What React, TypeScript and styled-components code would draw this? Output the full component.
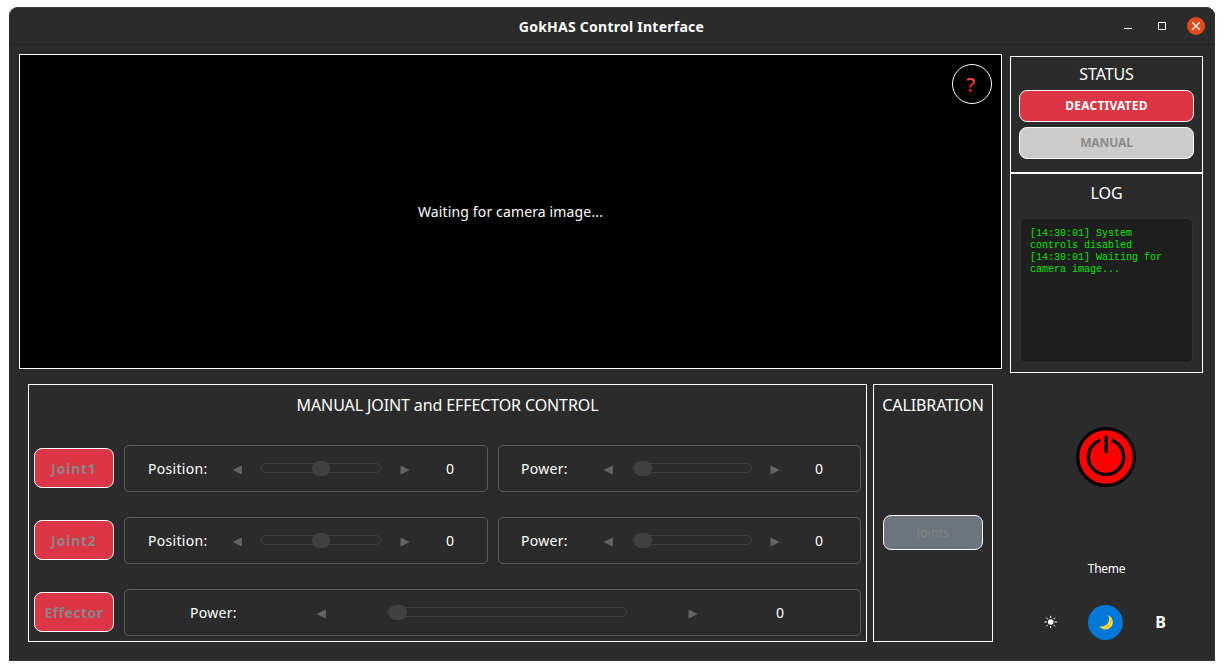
import React from "react";
import styled, { createGlobalStyle } from "styled-components";

const GlobalStyle = createGlobalStyle`
  * { box-sizing: border-box; }
  body { margin: 0; background: #fff; font-family: "Noto Sans", "Open Sans", sans-serif; color: #fff; overflow: hidden; }
  button { font-family: inherit; padding: 0; margin: 0; }
`;

const Page = styled.div`
  width: 1224px;
  height: 670px;
  padding: 7px 9px 9px;
`;

const Window = styled.div`
  display: flex;
  flex-direction: column;
  width: 1206px;
  height: 654px;
  background: #2b2b2b;
  border-radius: 9px 9px 0 0;
  box-shadow: inset 0 1px 0 #3b3b3b, inset -1px 0 0 #353535, inset 0 -1px 0 #353535;
  overflow: hidden;
`;

const TitleBar = styled.header`
  display: grid;
  grid-template-columns: 1fr auto 1fr;
  align-items: center;
  height: 38px;
  flex: none;
  padding: 0 10px 0 0;
  border-bottom: 1px solid #232323;
`;

const WindowTitle = styled.h1`
  grid-column: 2;
  margin: 2px 0 0 9px;
  font-size: 14px;
  line-height: 20px;
  font-weight: 700;
  letter-spacing: 0.25px;
  white-space: nowrap;
`;

const WindowButtons = styled.div`
  display: flex;
  justify-content: flex-end;
  align-items: center;
  gap: 16px;
`;

const WindowButton = styled.button<{ $close?: boolean }>`
  display: grid;
  place-items: center;
  width: 18px;
  height: 18px;
  border: 0;
  border-radius: 50%;
  background: ${(p) => (p.$close ? "#e14a1a" : "transparent")};
`;

const Body = styled.div`
  display: flex;
  gap: 8px;
  padding: 9px 12px 0 10px;
`;

const MainColumn = styled.main`
  display: flex;
  flex-direction: column;
  gap: 15px;
  width: 983px;
`;

const SideColumn = styled.aside`
  display: flex;
  flex-direction: column;
  width: 193px;
  padding-top: 2px;
`;

const Camera = styled.section`
  position: relative;
  display: grid;
  place-items: center;
  height: 315px;
  border: 1px solid #fff;
  background: #000;
`;

const CameraText = styled.span`
  font-size: 14px;
  line-height: 20px;
  letter-spacing: 0.14px;
`;

const HelpButton = styled.button`
  position: absolute;
  top: 9px;
  right: 9px;
  width: 40px;
  height: 40px;
  padding: 1px 2px 0 0;
  border: 1px solid #fff;
  border-radius: 50%;
  background: #000;
`;

const HelpMark = styled.span`
  font-size: 20px;
  line-height: 28px;
  font-weight: 600;
  color: transparent;
  background: linear-gradient(#ff5040 25%, #f01020 75%);
  background-clip: text;
`;

const LowerRow = styled.div`
  display: flex;
  gap: 6px;
  padding-left: 9px;
`;

const Panel = styled.section<{ $width: number; $height: number }>`
  display: flex;
  flex-direction: column;
  width: ${(p) => p.$width}px;
  height: ${(p) => p.$height}px;
  border: 1px solid #fff;
`;

const PanelTitle = styled.h2<{ $top: number }>`
  margin: ${(p) => p.$top}px 0 0;
  font-size: 16px;
  line-height: 22px;
  font-weight: 400;
  letter-spacing: -0.11px;
  text-align: center;
  white-space: nowrap;
`;

const JointRows = styled.div`
  display: flex;
  flex-direction: column;
  gap: 25px;
  padding: 29px 5px 0;
`;

const JointRow = styled.div`
  display: flex;
  gap: 10px;
  height: 47px;
`;

const JointButton = styled.button<{ $spacing: number }>`
  width: 80px;
  height: 40px;
  margin-top: 3px;
  padding-bottom: 0;
  border: 1px solid #fff;
  border-radius: 8px;
  background: #dc3545;
  color: #8d8385;
  font-size: 14px;
  line-height: 20px;
  font-weight: 700;
  letter-spacing: ${(p) => p.$spacing}px;
  padding-top: 2px;
`;

const ControlBox = styled.div<{ $width: number; $columns: string }>`
  display: grid;
  grid-template-columns: ${(p) => p.$columns};
  align-items: center;
  justify-items: center;
  width: ${(p) => p.$width}px;
  height: 47px;
  border: 1px solid #5c5c5c;
  border-radius: 5px;
`;

const ControlLabel = styled.span<{ $indent: number }>`
  justify-self: start;
  padding-left: ${(p) => p.$indent}px;
  font-size: 14px;
  line-height: 20px;
  letter-spacing: 0.3px;
`;

const StepButton = styled.button`
  display: grid;
  place-items: center;
  width: 18px;
  height: 18px;
  margin: 3px 1px 0 0;
  border: 0;
  background: transparent;
`;

const Track = styled.div<{ $width: number }>`
  position: relative;
  top: -0.5px;
  width: ${(p) => p.$width}px;
  height: 10px;
  border: 1px solid #3f3f3f;
  border-radius: 5px;
`;

const Thumb = styled.div<{ $left: number }>`
  position: absolute;
  top: -3px;
  left: ${(p) => p.$left}px;
  width: 18px;
  height: 15px;
  border-radius: 7px;
  background: #414141;
`;

const Value = styled.span`
  font-size: 14px;
  line-height: 20px;
`;

const CalibrationButton = styled.button`
  width: 100px;
  height: 35px;
  margin: 99px auto 0;
  border: 1px solid #fff;
  border-radius: 8px;
  background: #6c757d;
  color: #828282;
  font-size: 12px;
  letter-spacing: 0.2px;
`;

const StatusList = styled.div`
  display: flex;
  flex-direction: column;
  gap: 5px;
  padding: 5px 8px 0;
`;

const StatusButton = styled.button<{ $off?: boolean }>`
  height: 32px;
  padding-bottom: 2px;
  border: 1px solid #fff;
  border-radius: 8px;
  background: ${(p) => (p.$off ? "#ccc" : "#dc3545")};
  color: ${(p) => (p.$off ? "#8b8b8b" : "#fff")};
  font-size: 12px;
  font-weight: 700;
  letter-spacing: ${(p) => (p.$off ? "-0.1px" : "0.2px")};
`;

const LogView = styled.div`
  height: 145px;
  margin: 14px 9px 0;
  padding: 9px 8px 8px 9px;
  border: 1px solid #333;
  border-radius: 5px;
  background: #1e1e1e;
  color: #00e600;
  font: 10px/12px "Liberation Mono", monospace;
`;

const LogLine = styled.p`
  margin: 0;
`;

const PowerButton = styled.button`
  width: 60px;
  height: 60px;
  margin: 54px 0 0 66px;
  border: 0;
  border-radius: 50%;
  background: transparent;
`;

const ThemeTitle = styled.div`
  margin-top: 73px;
  font-size: 12px;
  line-height: 17px;
  letter-spacing: -0.3px;
  text-align: center;
`;

const ThemeRow = styled.div`
  display: flex;
  justify-content: space-between;
  padding: 0 25px 0 23px;
  margin-top: 28px;
`;

const ThemeButton = styled.button<{ $active?: boolean }>`
  display: grid;
  place-items: center;
  width: 35px;
  height: 35px;
  padding-bottom: 1px;
  border: 0;
  border-radius: 50%;
  background: ${(p) => (p.$active ? "#0078d7" : "transparent")};
  color: #fff;
  font-size: 16px;
  line-height: 22px;
  font-weight: 700;
`;

const Arrow = ({ dir }: { dir: "left" | "right" }) => (
  <svg width="10" height="10" viewBox="0 0 10 10" style={{ display: "block" }}>
    <path d={dir === "left" ? "M9.8 0.5V9.5L0.6 5Z" : "M0.5 0.5V9.5L9.7 5Z"} fill="#646464" />
  </svg>
);

interface ControlProps {
  label: string;
  indent: number;
  width: number;
  columns: string;
  track: number;
  thumb: number;
}

const Control = ({ label, indent, width, columns, track, thumb }: ControlProps) => (
  <ControlBox $width={width} $columns={columns}>
    <ControlLabel $indent={indent}>{label}</ControlLabel>
    <StepButton aria-label="Decrease"><Arrow dir="left" /></StepButton>
    <Track $width={track}><Thumb $left={thumb} /></Track>
    <StepButton aria-label="Increase"><Arrow dir="right" /></StepButton>
    <Value>0</Value>
  </ControlBox>
);

const joints = ["Joint1", "Joint2"];

export default function App() {
  return (
    <Page>
      <GlobalStyle />
      <Window>
        <TitleBar>
          <WindowTitle>GokHAS Control Interface</WindowTitle>
          <WindowButtons>
            <WindowButton aria-label="Minimize">
              <svg width="18" height="18"><path d="M5 11.5H13" stroke="#fff" /></svg>
            </WindowButton>
            <WindowButton aria-label="Maximize">
              <svg width="18" height="18"><path d="M5.5 5.5H12.5V12.5H5.5Z" stroke="#fff" fill="none" /></svg>
            </WindowButton>
            <WindowButton $close aria-label="Close">
              <svg width="18" height="18"><path d="M5.2 5.2L12.8 12.8M12.8 5.2L5.2 12.8" stroke="#fff" strokeWidth="1.3" /></svg>
            </WindowButton>
          </WindowButtons>
        </TitleBar>
        <Body>
          <MainColumn>
            <Camera>
              <CameraText>Waiting for camera image...</CameraText>
              <HelpButton><HelpMark>?</HelpMark></HelpButton>
            </Camera>
            <LowerRow>
              <Panel $width={839} $height={258}>
                <PanelTitle $top={9}>MANUAL JOINT and EFFECTOR CONTROL</PanelTitle>
                <JointRows>
                  {joints.map((name) => (
                    <JointRow key={name}>
                      <JointButton $spacing={0.75}>{name}</JointButton>
                      <Control label="Position:" indent={23} width={364} columns="93px 38px 130px 39px 50px" track={120} thumb={50} />
                      <Control label="Power:" indent={22} width={363} columns="91px 37px 130px 37px 50px" track={120} thumb={1} />
                    </JointRow>
                  ))}
                  <JointRow>
                    <JointButton $spacing={0.45}>Effector</JointButton>
                    <Control label="Power:" indent={65} width={737} columns="135px 122px 250px 122px 52px" track={240} thumb={1} />
                  </JointRow>
                </JointRows>
              </Panel>
              <Panel $width={120} $height={258}>
                <PanelTitle $top={9}>CALIBRATION</PanelTitle>
                <CalibrationButton>Joints</CalibrationButton>
              </Panel>
            </LowerRow>
          </MainColumn>
          <SideColumn>
            <Panel $width={193} $height={117}>
              <PanelTitle $top={6}>STATUS</PanelTitle>
              <StatusList>
                <StatusButton>DEACTIVATED</StatusButton>
                <StatusButton $off>MANUAL</StatusButton>
              </StatusList>
            </Panel>
            <Panel $width={193} $height={200}>
              <PanelTitle $top={8}>LOG</PanelTitle>
              <LogView>
                <LogLine>[14:30:01] System controls disabled</LogLine>
                <LogLine>[14:30:01] Waiting for camera image...</LogLine>
              </LogView>
            </Panel>
            <PowerButton aria-label="Power">
              <svg width="60" height="60" viewBox="0 0 60 60" style={{ display: "block" }}>
                <circle cx="30" cy="30" r="28.3" fill="#f00" stroke="#000" strokeWidth="3.2" />
                <path d="M23 13.8A17.6 17.6 0 1 0 37 13.8M30 10.3V24.5" fill="none" stroke="#000" strokeWidth="3.4" strokeLinecap="round" />
              </svg>
            </PowerButton>
            <ThemeTitle>Theme</ThemeTitle>
            <ThemeRow>
              <ThemeButton aria-label="Light">
                <svg width="14" height="14" viewBox="0 0 14 14">
                  <circle cx="6.7" cy="7" r="2.8" fill="#fff" />
                  <path d="M6.7 0.8V3M6.7 11V13.2M0.4 7H2.9M10.5 7H13M2.3 2.6L3.9 4.2M9.5 9.8L11.1 11.4M11.1 2.6L9.5 4.2M3.9 9.8L2.3 11.4" stroke="#fff" strokeWidth="1" />
                </svg>
              </ThemeButton>
              <ThemeButton $active aria-label="Dark">
                <svg width="16" height="16" viewBox="0 0 16 16">
                  <path d="M10 1.2C13.4 2.4 15.3 5.4 14.8 9C14.2 13 10.6 15.8 6.8 15.4C4.2 15.1 2.2 13.9 1 12.3C4.8 13 8.3 11.8 10 9.1C11.6 6.6 11.5 3.7 10 1.2Z" fill="#fbd93a" />
                  <circle cx="12.9" cy="7" r="0.8" fill="#dba924" />
                  <circle cx="10.3" cy="12" r="0.9" fill="#dba924" />
                  <circle cx="6.5" cy="13.8" r="0.6" fill="#dba924" />
                </svg>
              </ThemeButton>
              <ThemeButton>B</ThemeButton>
            </ThemeRow>
          </SideColumn>
        </Body>
      </Window>
    </Page>
  );
}
